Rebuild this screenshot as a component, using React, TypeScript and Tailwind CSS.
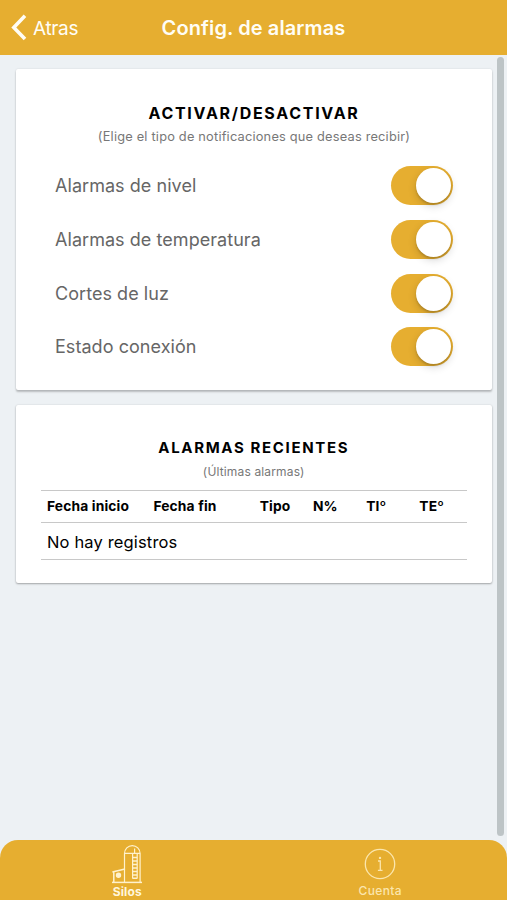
import React, { useState } from 'react';

interface AlarmSetting {
  id: string;
  label: string;
}

const SETTINGS: AlarmSetting[] = [
  { id: 'nivel', label: 'Alarmas de nivel' },
  { id: 'temperatura', label: 'Alarmas de temperatura' },
  { id: 'luz', label: 'Cortes de luz' },
  { id: 'conexion', label: 'Estado conexión' },
];

const COLUMNS = [
  { label: 'Fecha inicio', className: 'col-span-2' },
  { label: 'Fecha fin', className: 'col-span-2' },
  { label: 'Tipo', className: '' },
  { label: 'N%', className: '' },
  { label: 'TIº', className: '' },
  { label: 'TEº', className: '' },
];

const BackIcon = () => (
  <svg width="16" height="27" viewBox="0 0 16 27" fill="none" stroke="#fffdf5" strokeWidth="3.6">
    <path d="M14 1.8 2.8 13.4 14 25" />
  </svg>
);

const SiloIcon = () => (
  <svg width="32" height="40" viewBox="0 0 32 40" fill="none" stroke="#fff2cd" strokeWidth="1.2">
    <path d="M1 37.4h30" strokeWidth="1.5" />
    <path d="M13.5 37.5V8.6a7.8 8 0 0 1 15.6 0v28.9" />
    <path d="M13.5 8.4h15.6M23.6 3.6v4.8" />
    <path d="M21.6 9v24.5M26.2 9v24.5" />
    <path d="M21.6 12.5h4.6M21.6 16h4.6M21.6 19.5h4.6M21.6 23h4.6M21.6 26.5h4.6M21.6 30h4.6M21.6 33.3h4.6" strokeWidth="1.4" />
    <path d="M2.8 37.5V27M1.4 26.9 14 23.9" strokeWidth="1.5" />
    <circle cx="7.5" cy="30.2" r="2.1" fill="#fff2cd" />
  </svg>
);

const InfoIcon = () => (
  <svg width="32" height="32" viewBox="0 0 32 32" fill="none" stroke="#fbe6ad" strokeWidth="1.3">
    <circle cx="16" cy="16" r="14.7" />
    <path d="M14 13h2.3v9.3M13.9 22.4h4.6" />
    <circle cx="16" cy="9.9" r="1.2" fill="#fbe6ad" stroke="none" />
  </svg>
);

interface ToggleProps {
  label: string;
  checked: boolean;
  onChange: () => void;
}

const Toggle: React.FC<ToggleProps> = ({ label, checked, onChange }) => (
  <button
    role="switch"
    aria-checked={checked}
    aria-label={label}
    onClick={onChange}
    className={`flex h-[39px] w-[62.5px] items-center rounded-full px-[2.5px] transition-colors ${checked ? 'justify-end bg-[#e6ae30]' : 'justify-start bg-gray-200'}`}
  >
    <span className="size-[35px] rounded-full bg-white shadow-[0_3px_9px_rgba(0,0,0,0.16),0_2px_2px_rgba(0,0,0,0.14)]" />
  </button>
);

export default function App() {
  const [enabled, setEnabled] = useState<Record<string, boolean>>({
    nivel: true,
    temperatura: true,
    luz: true,
    conexion: true,
  });

  const toggle = (id: string) => setEnabled((prev) => ({ ...prev, [id]: !prev[id] }));

  return (
    <div className="flex h-[900px] w-full flex-col overflow-hidden bg-[#edf1f4] font-['Inter','Liberation_Sans',sans-serif]">
      <header className="grid h-[54.5px] shrink-0 grid-cols-[1fr_auto_1fr] items-center bg-[#e6ae30] px-[11px] text-[#fffdf5]">
        <button className="flex items-center gap-[6px]">
          <BackIcon />
          <span className="pt-[3px] text-[19px] tracking-[-0.35px]">Atras</span>
        </button>
        <h1 className="pt-px text-[20px] font-semibold tracking-[0.1px]">Config. de alarmas</h1>
      </header>

      <div className="flex min-h-0 flex-1">
        <main className="flex w-[492px] flex-col gap-[15px] pt-[14.5px] pl-[15.5px]">
          <section className="h-[321px] rounded-[2px] bg-white pr-[39px] pl-[39.5px] shadow-[0_2px_2px_rgba(0,0,0,0.22),0_0_2px_rgba(0,0,0,0.12)]">
            <h2 className="pt-[34px] text-center text-[16px] leading-5 font-bold tracking-[1.7px]">ACTIVAR/DESACTIVAR</h2>
            <p className="mt-[6px] text-center text-[12.8px] leading-4 tracking-[0.2px] text-[#777]">
              (Elige el tipo de notificaciones que deseas recibir)
            </p>
            <ul className="mt-[14px]">
              {SETTINGS.map((item) => (
                <li key={item.id} className="flex h-[53.7px] items-center justify-between">
                  <span className="text-[18px] tracking-[0.05px] text-[#666]">{item.label}</span>
                  <Toggle label={item.label} checked={enabled[item.id]} onChange={() => toggle(item.id)} />
                </li>
              ))}
            </ul>
          </section>

          <section className="h-[178px] rounded-[2px] bg-white px-[25.5px] shadow-[0_1px_2px_rgba(0,0,0,0.3),0_0_2px_rgba(0,0,0,0.1)]">
            <h2 className="pt-[33px] text-center text-[15px] leading-5 font-bold tracking-[1.65px]">ALARMAS RECIENTES</h2>
            <p className="mt-[6px] text-center text-[12px] leading-4 tracking-[0.15px] text-[#777]">(Últimas alarmas)</p>
            <div className="mt-[9.5px] border-y border-[#c8c8c8]">
              <div className="grid h-8 grid-cols-8 items-center border-b border-[#c8c8c8]">
                {COLUMNS.map((column) => (
                  <span
                    key={column.label}
                    className={`pt-px pl-[6px] text-[13.8px] font-bold tracking-[0.15px] whitespace-nowrap ${column.className}`}
                  >
                    {column.label}
                  </span>
                ))}
              </div>
              <div className="flex h-[36.5px] items-center pt-[3px] pl-[6px] text-[16.5px] tracking-[0.15px]">No hay registros</div>
            </div>
          </section>
        </main>
        <div className="mt-[2.5px] ml-[5px] h-[779px] w-[7px] rounded-full bg-[#bdc4c6]" />
      </div>

      <footer className="grid h-[60.5px] shrink-0 grid-cols-2 rounded-t-[18px] bg-[#e6ae30] text-[12px]">
        <button className="flex flex-col items-center pt-[5px] pl-px font-bold text-[#fff6dc]">
          <SiloIcon />
          <span className="leading-[13px] tracking-[0.1px]">Silos</span>
        </button>
        <button className="flex flex-col items-center pt-[8px] font-medium text-[#fbe6ad]">
          <InfoIcon />
          <span className="mt-1 leading-[14px] tracking-[0.35px]">Cuenta</span>
        </button>
      </footer>
    </div>
  );
}
